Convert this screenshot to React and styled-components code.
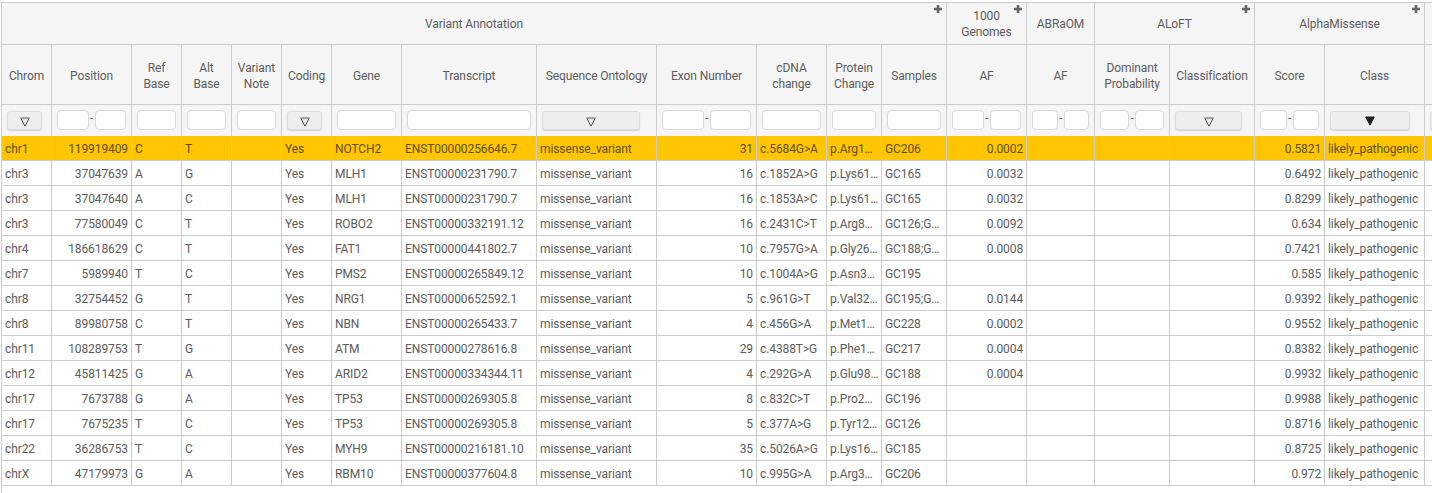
import React from "react";
import styled, { createGlobalStyle } from "styled-components";

const Global = createGlobalStyle`
  html, body { margin: 0; padding: 0; background: #fff; overflow: hidden; }
  body { font-family: Roboto, "Liberation Sans", sans-serif; font-size: 12px; letter-spacing: -0.1px; color: #5c5c5c; }
`;

const Frame = styled.div`
  margin: 2px 0 0 1px;
  height: 491px;
  box-sizing: border-box;
  border-top: 1px solid #ccc;
  border-left: 1px solid #ccc;
  overflow: hidden;
`;
const Table = styled.table`
  table-layout: fixed;
  border-collapse: separate;
  border-spacing: 0;
  width: ${(p) => p.$w}px;
`;
const Col = styled.col`
  width: ${(p) => p.$w}px;
`;
const HeadCell = styled.th`
  box-sizing: border-box;
  position: relative;
  height: ${(p) => p.$h}px;
  padding: ${(p) => p.$pt}px 3px 0;
  background: #f5f5f5;
  border-right: 1px solid #ccc;
  border-bottom: 1px solid #ccc;
  font-weight: 400;
  font-size: 12px;
  letter-spacing: -0.1px;
  line-height: 16px;
  text-align: center;
  vertical-align: middle;
  color: #5c5c5c;
`;
const FilterCell = styled.th`
  box-sizing: border-box;
  height: 31px;
  padding: 0 5px;
  background: #f5f5f5;
  border-right: 1px solid #ccc;
  font-weight: 400;
  vertical-align: top;
`;
const Cell = styled.td`
  box-sizing: border-box;
  height: 25px;
  padding: 2px ${(p) => (p.$tight ? 2 : 3)}px 0 3px;
  background: ${(p) => (p.$hl ? "#ffc600" : "#fff")};
  border-right: 1px solid #ccc;
  border-bottom: 1px solid #ccc;
  font-size: 12px;
  line-height: 22px;
  text-align: ${(p) => (p.$num ? "right" : "left")};
  white-space: nowrap;
  overflow: hidden;
  text-overflow: ellipsis;
  color: ${(p) => (p.$hl ? "#5f4f14" : "#5c5c5c")};
`;
const Plus = styled.svg`
  position: absolute;
  top: 2px;
  right: 4px;
  width: 8px;
  height: 8px;
  fill: #666;
`;
const TextInput = styled.input`
  display: block;
  box-sizing: border-box;
  width: 100%;
  height: 20px;
  margin: 5px 0 0;
  padding: 0 3px;
  border: 1px solid #d8d8d8;
  border-radius: 4px;
  background: #fff;
  outline: none;
`;
const Range = styled.div`
  display: flex;
  align-items: flex-start;
  margin-top: 5px;
`;
const RangeInput = styled.input`
  flex: 1 1 0;
  min-width: 0;
  box-sizing: border-box;
  height: 20px;
  margin: 0;
  padding: 0 3px;
  border: 1px solid #d8d8d8;
  border-radius: 4px;
  background: #fff;
  outline: none;
`;
const Dash = styled.span`
  flex: 0 0 6px;
  line-height: 17px;
  font-size: 12px;
  text-align: center;
  color: #5c5c5c;
`;
const SelectBtn = styled.div`
  display: flex;
  align-items: center;
  justify-content: center;
  box-sizing: border-box;
  width: ${(p) => p.$w}px;
  height: 19px;
  margin-top: 6px;
  border: 1px solid #ddd;
  border-radius: 3px;
  background: #eee;
  box-shadow: 0 1px 1px rgba(0, 0, 0, 0.14);
`;
const Tri = styled.svg`
  width: 10px;
  height: 10px;
  margin-top: ${(p) => (p.$on ? "0" : "2px")};
  fill: ${(p) => (p.$on ? "#222" : "none")};
  stroke: ${(p) => (p.$on ? "#222" : "#5c5c5c")};
  stroke-width: 1;
`;

const groups = [
  { name: "Variant Annotation", span: 13, plus: true },
  { name: "1000 Genomes", span: 1, plus: true },
  { name: "ABRaOM", span: 1 },
  { name: "ALoFT", span: 2, plus: true },
  { name: "AlphaMissense", span: 2, plus: true },
  { name: "", span: 1 },
];

const columns = [
  { w: 50, label: "Chrom", f: "select", bw: 35 },
  { w: 80, label: "Position", f: "range", num: true },
  { w: 50, label: "Ref Base", f: "text" },
  { w: 50, label: "Alt Base", f: "text" },
  { w: 50, label: "Variant Note", f: "text" },
  { w: 50, label: "Coding", f: "select", bw: 35 },
  { w: 70, label: "Gene", f: "text" },
  { w: 135, label: "Transcript", f: "text" },
  { w: 120, label: "Sequence Ontology", f: "select", bw: 98 },
  { w: 100, label: "Exon Number", f: "range", num: true },
  { w: 70, label: "cDNA change", f: "text" },
  { w: 55, label: "Protein Change", f: "text" },
  { w: 65, label: "Samples", f: "text" },
  { w: 80, label: "AF", f: "range", num: true },
  { w: 68, label: "AF", f: "range", num: true },
  { w: 75, label: "Dominant Probability", f: "range", num: true },
  { w: 85, label: "Classification", f: "select", bw: 67 },
  { w: 70, label: "Score", f: "range", num: true },
  { w: 100, label: "Class", f: "select", bw: 80, on: true },
  { w: 100, label: "", f: "select", bw: 80 },
];

const rows = [
  ["chr1", "119919409", "C", "T", "NOTCH2", "ENST00000256646.7", "31", "c.5684G>A", "p.Arg1895His", "GC206", "0.0002", "0.5821"],
  ["chr3", "37047639", "A", "G", "MLH1", "ENST00000231790.7", "16", "c.1852A>G", "p.Lys618Glu", "GC165", "0.0032", "0.6492"],
  ["chr3", "37047640", "A", "C", "MLH1", "ENST00000231790.7", "16", "c.1853A>C", "p.Lys618Thr", "GC165", "0.0032", "0.8299"],
  ["chr3", "77580049", "C", "T", "ROBO2", "ENST00000332191.12", "16", "c.2431C>T", "p.Arg811Trp", "GC126;GC185", "0.0092", "0.634"],
  ["chr4", "186618629", "C", "T", "FAT1", "ENST00000441802.7", "10", "c.7957G>A", "p.Gly2653Arg", "GC188;GC206", "0.0008", "0.7421"],
  ["chr7", "5989940", "T", "C", "PMS2", "ENST00000265849.12", "10", "c.1004A>G", "p.Asn335Ser", "GC195", "", "0.585"],
  ["chr8", "32754452", "G", "T", "NRG1", "ENST00000652592.1", "5", "c.961G>T", "p.Val321Phe", "GC195;GC228", "0.0144", "0.9392"],
  ["chr8", "89980758", "C", "T", "NBN", "ENST00000265433.7", "4", "c.456G>A", "p.Met152Ile", "GC228", "0.0002", "0.9552"],
  ["chr11", "108289753", "T", "G", "ATM", "ENST00000278616.8", "29", "c.4388T>G", "p.Phe1463Cys", "GC217", "0.0004", "0.8382"],
  ["chr12", "45811425", "G", "A", "ARID2", "ENST00000334344.11", "4", "c.292G>A", "p.Glu98Lys", "GC188", "0.0004", "0.9932"],
  ["chr17", "7673788", "G", "A", "TP53", "ENST00000269305.8", "8", "c.832C>T", "p.Pro278Ser", "GC196", "", "0.9988"],
  ["chr17", "7675235", "T", "C", "TP53", "ENST00000269305.8", "5", "c.377A>G", "p.Tyr126Cys", "GC126", "", "0.8716"],
  ["chr22", "36286753", "T", "C", "MYH9", "ENST00000216181.10", "35", "c.5026A>G", "p.Lys1676Glu", "GC185", "", "0.8725"],
  ["chrX", "47179973", "G", "A", "RBM10", "ENST00000377604.8", "10", "c.995G>A", "p.Arg332His", "GC206", "", "0.972"],
];

function PlusIcon() {
  return (
    <Plus viewBox="0 0 8 8">
      <path d="M2.7 0h2.6v2.7H8v2.6H5.3V8H2.7V5.3H0V2.7h2.7z" />
    </Plus>
  );
}

function Filter({ col }) {
  if (col.f === "select") {
    return (
      <SelectBtn $w={col.bw}>
        <Tri viewBox="0 0 10 10" $on={col.on}>
          <path d="M0.7 1h8.6L5 9.2z" />
        </Tri>
      </SelectBtn>
    );
  }
  if (col.f === "range") {
    return (
      <Range>
        <RangeInput />
        <Dash>-</Dash>
        <RangeInput />
      </Range>
    );
  }
  return <TextInput />;
}

export default function App() {
  const total = columns.reduce((s, c) => s + c.w, 0);
  return (
    <>
      <Global />
      <Frame>
        <Table $w={total}>
          <colgroup>
            {columns.map((c, i) => (
              <Col key={i} $w={c.w} />
            ))}
          </colgroup>
          <thead>
            <tr>
              {groups.map((g, i) => (
                <HeadCell key={i} colSpan={g.span} $h={42} $pt={0}>
                  {g.name}
                  {g.plus && <PlusIcon />}
                </HeadCell>
              ))}
            </tr>
            <tr>
              {columns.map((c, i) => (
                <HeadCell key={i} $h={60} $pt={2}>
                  {c.label}
                </HeadCell>
              ))}
            </tr>
            <tr>
              {columns.map((c, i) => (
                <FilterCell key={i}>
                  <Filter col={c} />
                </FilterCell>
              ))}
            </tr>
          </thead>
          <tbody>
            {rows.map((r, i) => {
              const hl = i === 0;
              const [chrom, pos, ref, alt, gene, tx, exon, cdna, prot, samp, af, score] = r;
              return (
                <tr key={i}>
                  <Cell $hl={hl}>{chrom}</Cell>
                  <Cell $hl={hl} $num>{pos}</Cell>
                  <Cell $hl={hl}>{ref}</Cell>
                  <Cell $hl={hl}>{alt}</Cell>
                  <Cell $hl={hl} />
                  <Cell $hl={hl}>Yes</Cell>
                  <Cell $hl={hl}>{gene}</Cell>
                  <Cell $hl={hl}>{tx}</Cell>
                  <Cell $hl={hl}>missense_variant</Cell>
                  <Cell $hl={hl} $num>{exon}</Cell>
                  <Cell $hl={hl}>{cdna}</Cell>
                  <Cell $hl={hl} $tight>{prot}</Cell>
                  <Cell $hl={hl}>{samp}</Cell>
                  <Cell $hl={hl} $num>{af}</Cell>
                  <Cell $hl={hl} $num />
                  <Cell $hl={hl} $num />
                  <Cell $hl={hl} />
                  <Cell $hl={hl} $num>{score}</Cell>
                  <Cell $hl={hl}>likely_pathogenic</Cell>
                  <Cell $hl={hl} />
                </tr>
              );
            })}
          </tbody>
        </Table>
      </Frame>
    </>
  );
}
